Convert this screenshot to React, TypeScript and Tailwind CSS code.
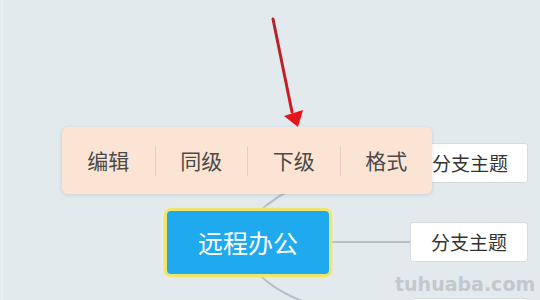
import React from "react";

const cjk = { fontFamily: '"Noto Sans CJK SC", "Noto Sans", sans-serif' };

export default function App() {
  const items = ["编辑", "同级", "下级", "格式"];
  return (
    <div className="relative w-[540px] h-[300px] overflow-hidden bg-[#e2eaee]" style={cjk}>
      <div className="absolute left-[1px] top-0 h-full w-[2px] bg-[#e9f0f2]" />
      {/* connectors */}
      <svg className="absolute inset-0" width="540" height="300" viewBox="0 0 540 300">
        <path d="M252 218 C280 190 330 163 410 163" stroke="#b7bfc3" strokeWidth="2" fill="none" />
        <path d="M330 242 L411 242" stroke="#b7bfc3" strokeWidth="2" fill="none" />
        <path d="M254 268 C272 292 320 318 410 318" stroke="#b7bfc3" strokeWidth="2" fill="none" />
      </svg>

      {/* branch boxes */}
      <div className="absolute left-[410px] top-[143px] w-[118px] h-[40px] bg-white border border-[#d6dcdf] rounded-[3px] flex items-center justify-center pl-[2px] text-[19px] text-[#333]">
        分支主题
      </div>
      <div className="absolute left-[410px] top-[222px] w-[118px] h-[40px] bg-white border border-[#d6dcdf] rounded-[3px] flex items-center justify-center text-[19px] text-[#333]">
        分支主题
      </div>
      <div className="absolute left-[412px] top-[298px] w-[116px] h-[40px] bg-white border border-[#d6dcdf] rounded-[3px]" />

      {/* central node */}
      <div className="absolute left-[164px] top-[208px] w-[168px] h-[69px] rounded-[7px] border-[3px] border-[#efe46c] bg-[#1fa9ef] shadow-[0_0_3px_#f3ec9a] flex items-center justify-center text-white text-[25px]">
        远程办公
      </div>

      {/* watermark */}
      <div
        className="absolute left-[395px] top-[275px] text-[19px] font-bold text-[#c2c8cb] leading-none"
        style={{ fontFamily: '"DejaVu Sans", sans-serif' }}
      >
        tuhuaba.com
      </div>

      {/* toolbar */}
      <div className="absolute left-[62px] top-[127px] w-[370px] h-[67px] rounded-[6px] bg-[#fce4d4] shadow-[0_1px_4px_rgba(0,0,0,0.12)] grid grid-cols-4 items-center">
        {items.map((t, i) => (
          <div
            key={t}
            className={`h-[30px] flex items-center justify-center text-[21px] text-[#4a4a4a] ${
              i > 0 ? "border-l border-[#ecccb8]" : ""
            }`}
          >
            {t}
          </div>
        ))}
      </div>

      {/* arrow */}
      <svg className="absolute inset-0 pointer-events-none" width="540" height="300" viewBox="0 0 540 300">
        <defs>
          <linearGradient id="ag" x1="0" y1="0" x2="0" y2="1">
            <stop offset="0" stopColor="#b0262c" />
            <stop offset="1" stopColor="#d01a22" />
          </linearGradient>
        </defs>
        <line x1="273" y1="19" x2="292" y2="112" stroke="url(#ag)" strokeWidth="3" strokeLinecap="round" />
        <polygon points="284,116 303,110 298,127" fill="#e8141c" />
      </svg>
    </div>
  );
}
